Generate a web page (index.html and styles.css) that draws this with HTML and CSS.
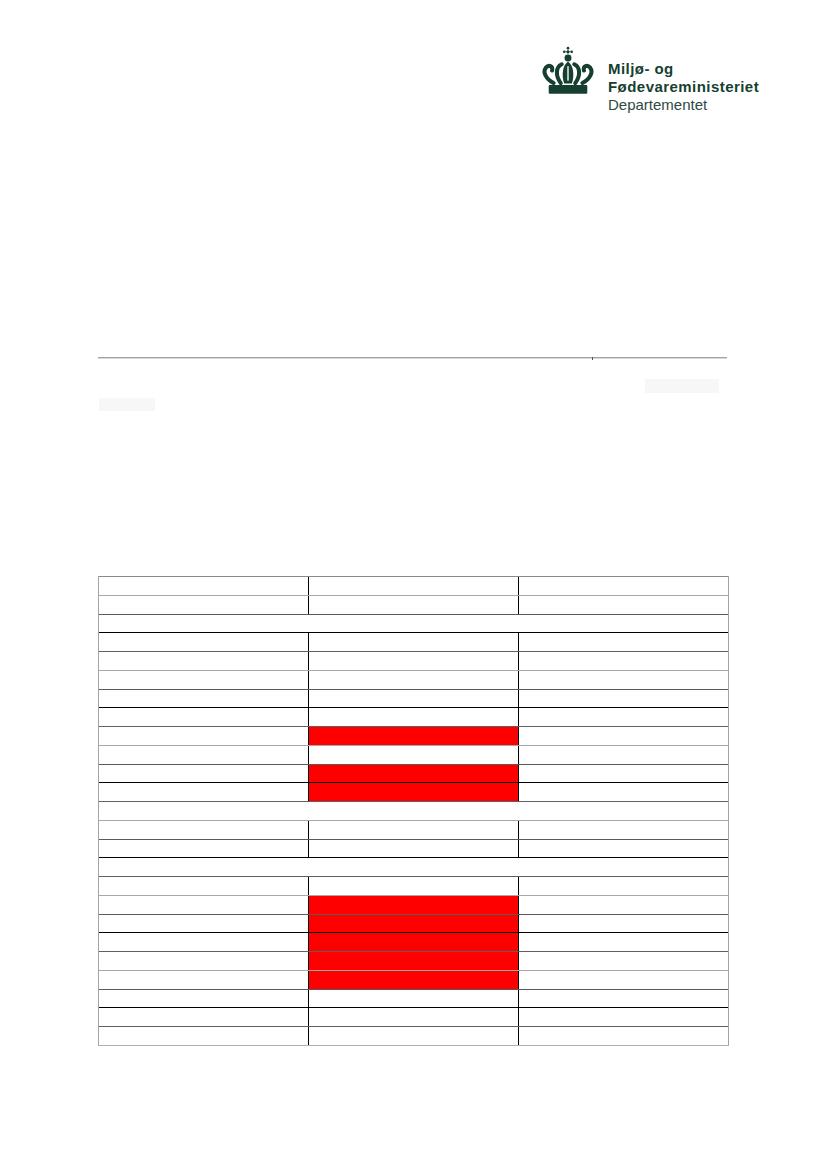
FILE: index.html
```html
<!DOCTYPE html>
<html lang="da">
<head>
<meta charset="utf-8">
<title>Miljø- og Fødevareministeriet</title>
<link rel="stylesheet" href="styles.css">
</head>
<body>
<div class="page">
  <header class="header">
    <div class="logo">
      <svg class="crown" width="54" height="52" viewBox="0 0 56 52" aria-hidden="true">
        <g fill="#173f30">
          <circle cx="28" cy="1.3" r="1.4"/>
          <circle cx="24.2" cy="5" r="1.4"/>
          <circle cx="31.8" cy="5" r="1.4"/>
          <path d="M28 2.8 L30.2 5 L28 7.4 L25.8 5 Z"/>
          <circle cx="28" cy="11.5" r="3.6"/>
          <path d="M28 15.2 C33.5 19 35 29 32 38 L24 38 C21 29 22.5 19 28 15.2 Z"/>
          <rect x="8" y="39.5" width="40" height="9" rx="1"/>
        </g>
        <g fill="none" stroke="#173f30" stroke-width="4.2" stroke-linecap="round">
          <path d="M13 37.5 C5 33 1.5 26 5 21.5 C8 18 12.5 20 11.5 24.5"/>
          <path d="M20.5 37.5 C15 30 15 21 21.5 18"/>
          <path d="M43 37.5 C51 33 54.5 26 51 21.5 C48 18 43.5 20 44.5 24.5"/>
          <path d="M35.5 37.5 C41 30 41 21 34.5 18"/>
        </g>
        <g fill="#fff">
          <rect x="27.3" y="20" width="1.4" height="15"/>
        </g>
      </svg>
      <div class="logo-text">
        <span class="logo-bold">Miljø- og</span>
        <span class="logo-bold">Fødevareministeriet</span>
        <span class="logo-reg">Departementet</span>
      </div>
    </div>
  </header>

  <div class="rule"></div>

  <div class="redact-row redact-right"><span class="redact r1"></span></div>
  <div class="redact-row"><span class="redact r2"></span></div>

  <div class="tbl">
    <div class="row"><div class="c"></div><div class="c"></div><div class="c"></div></div>
    <div class="row"><div class="c"></div><div class="c"></div><div class="c"></div></div>
    <div class="row"><div class="c span"></div></div>
    <div class="row"><div class="c"></div><div class="c"></div><div class="c"></div></div>
    <div class="row"><div class="c"></div><div class="c"></div><div class="c"></div></div>
    <div class="row"><div class="c"></div><div class="c"></div><div class="c"></div></div>
    <div class="row"><div class="c"></div><div class="c"></div><div class="c"></div></div>
    <div class="row"><div class="c"></div><div class="c"></div><div class="c"></div></div>
    <div class="row"><div class="c"></div><div class="c red"></div><div class="c"></div></div>
    <div class="row"><div class="c"></div><div class="c"></div><div class="c"></div></div>
    <div class="row"><div class="c"></div><div class="c red"></div><div class="c"></div></div>
    <div class="row"><div class="c"></div><div class="c red"></div><div class="c"></div></div>
    <div class="row"><div class="c span"></div></div>
    <div class="row"><div class="c"></div><div class="c"></div><div class="c"></div></div>
    <div class="row"><div class="c"></div><div class="c"></div><div class="c"></div></div>
    <div class="row"><div class="c span"></div></div>
    <div class="row"><div class="c"></div><div class="c"></div><div class="c"></div></div>
    <div class="row"><div class="c"></div><div class="c red"></div><div class="c"></div></div>
    <div class="row"><div class="c"></div><div class="c red"></div><div class="c"></div></div>
    <div class="row"><div class="c"></div><div class="c red"></div><div class="c"></div></div>
    <div class="row"><div class="c"></div><div class="c red"></div><div class="c"></div></div>
    <div class="row"><div class="c"></div><div class="c red"></div><div class="c"></div></div>
    <div class="row"><div class="c"></div><div class="c"></div><div class="c"></div></div>
    <div class="row"><div class="c"></div><div class="c"></div><div class="c"></div></div>
    <div class="row"><div class="c"></div><div class="c"></div><div class="c"></div></div>
  </div>
</div>
</body>
</html>
```

FILE: styles.css
```css
html, body {
  margin: 0;
  padding: 0;
  background: #ffffff;
}

body {
  font-family: "Liberation Sans", Arial, sans-serif;
  color: #000;
}

.page {
  width: 827px;
  min-height: 1169px;
  box-sizing: border-box;
  padding: 0 100px 0 98px;
}

.header {
  padding-top: 46px;
  padding-left: 443px;
  height: 357px;
  box-sizing: border-box;
}

.logo {
  display: flex;
  align-items: flex-start;
  gap: 13px;
}

.crown {
  display: block;
  flex: none;
}

.logo-text {
  display: flex;
  flex-direction: column;
  padding-top: 14px;
  white-space: nowrap;
}

.logo-bold {
  font-weight: 700;
  font-size: 15px;
  line-height: 18px;
  letter-spacing: 0.45px;
  color: #173f30;
}

.logo-reg {
  font-weight: 400;
  font-size: 15px;
  line-height: 18px;
  color: #2f4a40;
}

.rule {
  position: relative;
  height: 0;
  border-top: 1px solid #a2a2a2;
  border-bottom: 1px solid #d8d8d8;
}

.rule::after {
  content: "";
  position: absolute;
  left: 494px;
  top: -1px;
  width: 1px;
  height: 3px;
  background: #555;
}

.redact-row {
  display: flex;
  height: 19px;
  align-items: flex-start;
}

.redact-row.redact-right {
  justify-content: flex-end;
  padding-top: 20px;
  padding-right: 8px;
}

.redact {
  display: block;
  background: #f7f7f7;
}

.redact.r1 {
  width: 74px;
  height: 14px;
}

.redact.r2 {
  width: 56px;
  height: 13px;
  margin-left: 1px;
}

.tbl {
  margin-top: 159px;
  width: 629px;
  border-left: 1px solid #a4a4a4;
  border-right: 1px solid #a4a4a4;
  border-bottom: 1px solid #b0b0b0;
}

.row {
  display: grid;
  grid-template-columns: 209px 210px 1fr;
  height: 18.76px;
  box-sizing: border-box;
  border-top: 1px solid #707070;
}

.row:nth-child(4n+2) { border-top-color: #a8a8a8; }
.row:nth-child(4n+3) { border-top-color: #5a5a5a; }
.row:nth-child(4n+4) { border-top-color: #000000; }
.row:nth-child(4n+1) { border-top-color: #606060; }
.row:first-child { border-top-color: #8a8a8a; }

.c {
  min-width: 0;
}

.c + .c {
  border-left: 1px solid #000;
}

.c.span {
  grid-column: 1 / -1;
}

.c.red {
  background: #fe0000;
}
```
